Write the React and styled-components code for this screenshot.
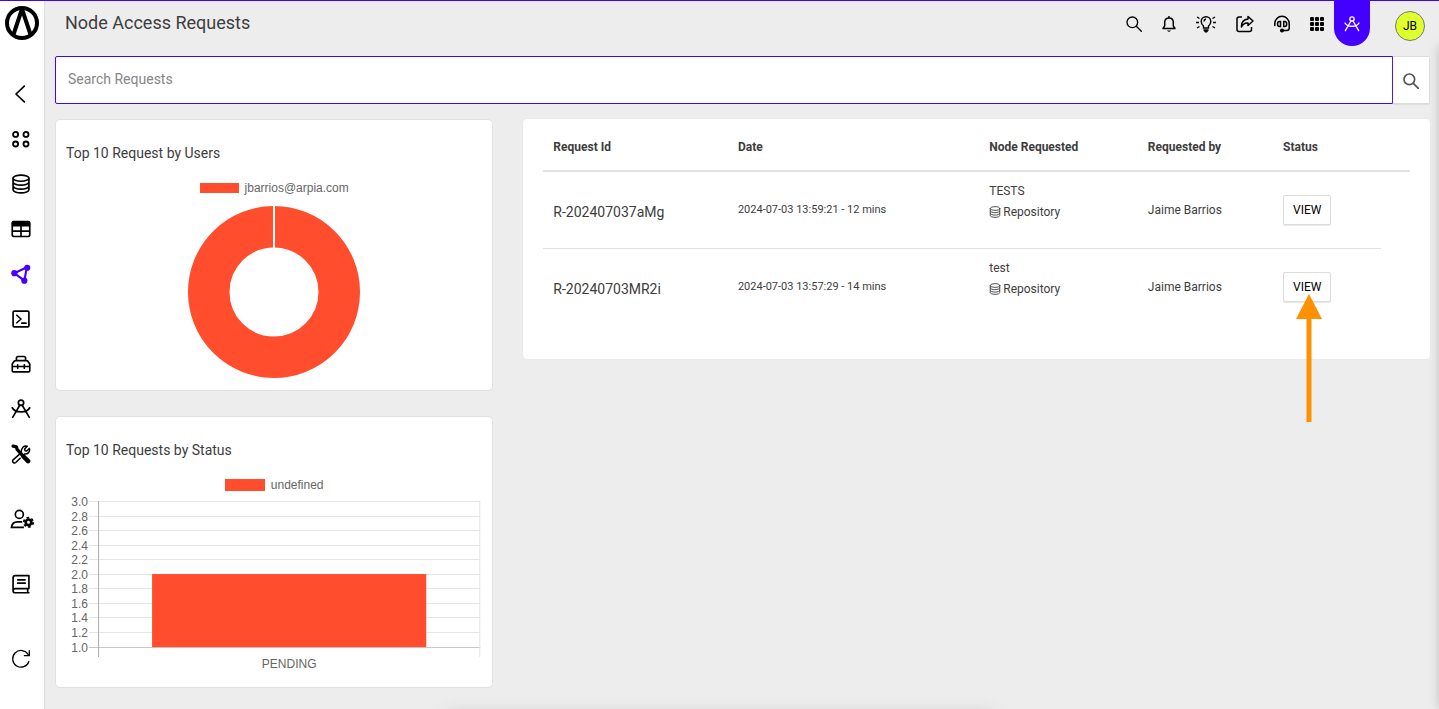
import React from 'react';
import styled, { createGlobalStyle } from 'styled-components';

const purple = '#4400ff';
const orange = '#ff4d2d';

const GlobalStyle = createGlobalStyle`
  *, *::before, *::after {
    box-sizing: border-box;
  }
  html, body {
    margin: 0;
    background: #ededed;
    color: #3d3d3d;
    font-family: Roboto, "Liberation Sans", sans-serif;
    font-size: 12px;
    line-height: 18px;
  }
  body {
    overflow: hidden;
  }
  svg {
    display: block;
  }
  button, input {
    font: inherit;
  }
`;

const Page = styled.div`
  display: flex;
  min-height: 100vh;
  border-top: 1px solid ${purple};
`;

const Sidebar = styled.aside`
  flex: none;
  display: flex;
  flex-direction: column;
  width: 45px;
  background: white;
  border-right: 1px solid #dedede;
`;

const LogoLink = styled.a`
  display: flex;
  padding: 5px;
  height: 45px;
  color: black;
`;

const Nav = styled.nav`
  display: flex;
  flex-direction: column;
  margin-top: 25px;
  padding-right: 2px;
`;

const NavButton = styled.button`
  display: flex;
  align-items: center;
  justify-content: center;
  height: 45px;
  margin: ${(props) => props.$space || 0}px 0 0;
  padding: 0;
  border: 0;
  background: none;
  color: ${(props) => (props.$active ? purple : 'black')};
`;

const Content = styled.div`
  flex: 1;
  min-width: 0;
`;

const Header = styled.header`
  display: flex;
  align-items: flex-start;
  justify-content: space-between;
  height: 45px;
  padding: 0 14px 0 20px;
`;

const PageTitle = styled.h1`
  margin: 10px 0 0;
  font-size: 18px;
  font-weight: 400;
  line-height: 24px;
`;

const Tools = styled.div`
  display: flex;
  align-items: flex-start;
`;

const ToolButton = styled.button`
  display: flex;
  align-items: center;
  height: 45px;
  padding: 0 10px;
  border: 0;
  border-radius: 0 0 18px 18px;
  background: ${(props) => (props.$active ? purple : 'none')};
  color: ${(props) => (props.$active ? 'white' : 'black')};
`;

const Avatar = styled.button`
  width: 30px;
  height: 30px;
  margin: 10px 0 0 25px;
  padding: 0;
  border: 1px solid #777;
  border-radius: 50%;
  background: #e0ff2e;
  color: black;
`;

const Main = styled.main`
  padding: 10px 9px 20px 10px;
`;

const SearchForm = styled.form`
  display: flex;
  height: 48px;
`;

const SearchInput = styled.input`
  flex: 1;
  min-width: 0;
  padding: 0 12px 2px;
  border: 1px solid ${purple};
  border-radius: 2px 0 0 2px;
  outline: 0;
  background: white;
  color: #3d3d3d;
  font-size: 14px;
  &::placeholder {
    color: #868686;
  }
`;

const SearchButton = styled.button`
  display: flex;
  align-items: center;
  justify-content: center;
  width: 37px;
  padding: 2px 0 0;
  border: 1px solid #dcdcdc;
  border-left: 0;
  border-radius: 0 2px 2px 0;
  background: white;
  box-shadow: 0 1px 1px #dcdcdc;
  color: #555;
`;

const Columns = styled.div`
  display: grid;
  grid-template-columns: repeat(3, 1fr);
  align-items: start;
  gap: 30px;
  margin-top: 15px;
`;

const Charts = styled.div`
  display: flex;
  flex-direction: column;
  gap: 25px;
`;

const Card = styled.section`
  height: 272px;
  padding: 23px 10px 0;
  border: 1px solid #dfe1e6;
  border-radius: 5px;
  background: white;
`;

const CardTitle = styled.h2`
  margin: 0;
  font-size: 14px;
  font-weight: 400;
  line-height: 20px;
`;

const Legend = styled.div`
  display: flex;
  align-items: center;
  justify-content: center;
  gap: 6px;
  height: 20px;
  margin-top: 15px;
  color: #666;
  font-family: "Liberation Sans", Arial, sans-serif;
`;

const Swatch = styled.span`
  width: ${(props) => props.$width}px;
  height: ${(props) => props.$height}px;
  background: ${orange};
`;

const Donut = styled.svg`
  margin: 8px auto 0;
  width: 172px;
  height: 172px;
`;

const BarChart = styled.svg`
  width: 100%;
  height: auto;
  fill: #666;
  font-family: "Liberation Sans", Arial, sans-serif;
`;

const TableCard = styled.section`
  grid-column: span 2;
  min-height: 240px;
  padding: 5px 20px;
  border-radius: 4px;
  background: white;
  box-shadow: 0 0 1px #d8d8d8;
`;

const Table = styled.table`
  width: 100%;
  border-collapse: collapse;
  table-layout: fixed;
`;

const Th = styled.th`
  width: ${(props) => props.$width};
  height: 47px;
  padding: 0 10px;
  border-bottom: 2px solid #dee2e6;
  text-align: left;
`;

const Td = styled.td`
  height: 77px;
  padding: 0 10px;
  border-top: 1px solid #dee2e6;
  vertical-align: middle;
`;

const NodeTd = styled(Td)`
  padding-top: 10px;
  vertical-align: top;
`;

const RequestId = styled.span`
  display: block;
  padding-top: 4px;
  font-size: 14px;
`;

const DateText = styled.span`
  font-size: 11px;
`;

const NodeType = styled.div`
  display: flex;
  align-items: center;
  gap: 2px;
  margin-top: 3px;
`;

const Action = styled.div`
  position: relative;
  width: fit-content;
`;

const ViewButton = styled.button`
  display: block;
  height: 30px;
  padding: 0 9px;
  border: 1px solid #dcdcdc;
  border-radius: 2px;
  background: white;
  box-shadow: 0 1px 1px #e6e6e6;
  color: black;
`;

const Pointer = styled.svg`
  position: absolute;
  top: 22px;
  left: 13px;
  fill: #ff9100;
  pointer-events: none;
`;

// closed panels wait just outside the window, only their shadow shows
const Drawer = styled.div`
  position: fixed;
  top: 46px;
  bottom: 0;
  left: 100%;
  width: 300px;
  box-shadow: 0 0 10px rgba(0, 0, 0, 0.2);
`;

const Toast = styled.div`
  position: fixed;
  top: 100%;
  left: 31%;
  right: 31%;
  height: 60px;
  box-shadow: 0 3px 18px rgba(0, 0, 0, 0.1);
`;

const Icon = ({ size = 20, width = 2, children }) => (
  <svg
    width={size}
    height={size}
    viewBox="0 0 24 24"
    fill="none"
    stroke="currentColor"
    strokeWidth={width}
    strokeLinecap="round"
    strokeLinejoin="round"
    aria-hidden="true"
  >
    {children}
  </svg>
);

const Logo = () => (
  <svg width="34" height="34" viewBox="0 0 34 34" fill="none" stroke="currentColor" aria-hidden="true">
    <circle cx="17" cy="17" r="15" strokeWidth="4" />
    <path d="M8.5 28.5 17 3l8.500 25.500" strokeWidth="4" strokeLinejoin="bevel" />
  </svg>
);

const BackIcon = () => <Icon><path d="M16 2.500 6 12l10 9.500" /></Icon>;

const AppsIcon = () => (
  <Icon width={2.2}>
    <circle cx="5.500" cy="6.500" r="3" />
    <circle cx="18" cy="6.500" r="3" />
    <circle cx="5.500" cy="18" r="3" />
    <circle cx="18" cy="18" r="3" />
  </Icon>
);

const DatabaseIcon = ({ size, width }) => (
  <Icon size={size} width={width}>
    <ellipse cx="12" cy="5" rx="9.500" ry="3.700" />
    <path d="M2.500 5v14c0 2 4.200 3.700 9.500 3.700s9.500-1.700 9.500-3.700V5M2.500 9.700c0 2 4.200 3.700 9.500 3.700s9.500-1.700 9.500-3.700M2.500 14.500c0 2 4.200 3.700 9.500 3.700s9.500-1.700 9.500-3.700" />
  </Icon>
);

const TableIcon = () => (
  <Icon>
    <rect x="1.500" y="3" width="21" height="18" rx="2" />
    <path d="M2 4h20v4H2z" fill="currentColor" />
    <path d="M2 14.500h20M12 8v13" />
  </Icon>
);

const NodesIcon = () => (
  <Icon width={2.6}>
    <path d="M4 11 19 4l-3 16z" />
    <g fill="currentColor" stroke="none">
      <circle cx="4" cy="11" r="3.700" />
      <circle cx="19.500" cy="4.500" r="3.700" />
      <circle cx="16" cy="20" r="3.700" />
    </g>
  </Icon>
);

const TerminalIcon = () => (
  <Icon>
    <rect x="2.500" y="2.500" width="19" height="19" rx="1.500" />
    <path d="m7 7.500 5 4.500-5 4.500M13 17h5" />
  </Icon>
);

const ToolboxIcon = () => (
  <Icon>
    <path d="M1.500 12 4 8.500Q4.500 8 5.500 8h13q1 0 1.500.500l2.500 3.500v8q0 1.500-1.500 1.500H3Q1.500 21.500 1.500 20zM6.500 7.500V5q0-2 2-2h7q2 0 2 2v2.500M1.500 15h21M8 13v4M16 13v4" />
  </Icon>
);

const CompassIcon = ({ size }) => (
  <Icon size={size}>
    <circle cx="12" cy="4.500" r="3.200" />
    <path d="M10.500 7.500 2 22M13.500 7.500 22 22M1.500 10.500c3.500 6.500 17.500 6.500 21 0" />
  </Icon>
);

const WrenchIcon = () => (
  <Icon>
    <path d="m2.500 2.500 4 1 .8 3L14 14" strokeWidth="4" />
    <path d="m15 15 5.500 5.500" strokeWidth="5.500" />
    <path d="M12.500 9.500c-.5-4.500 3-8 7-6.700l-3.200 3.200.5 2 2 .5 3.200-3.200c1.500 4-2 7.200-6 6.700M10 12.500l-7.500 6.500c-2 2 1.200 5 3.200 3.200L11 17" strokeWidth="1.800" />
  </Icon>
);

const UserCogIcon = () => (
  <svg width="28" height="20" viewBox="-4 0 33 24" fill="none" stroke="currentColor" strokeWidth="2" aria-hidden="true">
    <circle cx="10.500" cy="6.500" r="4.800" />
    <path d="M14 15.500H8q-6 0-7 6.500h15" />
    <circle cx="21.500" cy="16" r="3.400" strokeWidth="3.200" />
    <circle cx="21.500" cy="16" r="5.600" strokeWidth="2.200" strokeDasharray="3 2.860" />
  </svg>
);

const BookIcon = () => (
  <Icon>
    <path d="M21.500 17.500V2H5Q2.500 2 2.500 4.500V20q0 2.500 2.500 2.500h16.500M21 17.500H5Q2.500 17.500 2.500 20M20 17.500v5M8 7h9M8 11h9" />
  </Icon>
);

const RefreshIcon = () => (
  <Icon width={1.500}>
    <path d="M21.500 15a10 10 0 1 1-1-8.500M22 2v6h-6" />
  </Icon>
);

const SearchIcon = ({ size, width }) => (
  <Icon size={size} width={width}>
    <circle cx="9.500" cy="9.500" r="8" />
    <path d="m15.500 15.500 7.500 7.500" />
  </Icon>
);

const BellIcon = () => (
  <svg width="14" height="18" viewBox="0 0 14 18" fill="none" stroke="currentColor" strokeWidth="1.500" strokeLinejoin="round" aria-hidden="true">
    <path d="M1 13.500h12l-1.700-2.700V7.500C11.300 4.500 9.500 3 7 3S2.700 4.500 2.700 7.500v3.300zM7 1v2" />
    <path d="M5 15.500h4q-2 2.500-4 0" fill="currentColor" stroke="none" />
  </svg>
);

const BulbIcon = () => (
  <svg width="20" height="18" viewBox="0 0 20 18" fill="none" stroke="currentColor" strokeWidth="1.400" aria-hidden="true">
    <path d="M7.500 13v-2Q5.200 9 5.200 6.500a4.800 4.800 0 0 1 9.600 0Q14.800 9 12.500 11v2zM8 6.500q0-2 2-2.500M0 7.500h3M17 7.500h3M1 2l2.500 1.500M19 2l-2.500 1.500M1 13l2.500-1.500M19 13l-2.500-1.500" />
    <path d="M7.500 14.200h5v1.300L11 17.500H9l-1.500-2z" fill="currentColor" stroke="none" />
  </svg>
);

const ShareIcon = () => (
  <svg width="18" height="18" viewBox="0 0 18 18" fill="none" stroke="currentColor" strokeWidth="1.500" strokeLinejoin="round" aria-hidden="true">
    <path d="M6 2H3Q1 2 1 4v10.500Q1 16.500 3 16.500h10.500q2 0 2-2V12" />
    <path d="m12 1.500 5 4.500-5 4.500V8Q7.500 7.500 5.500 12 5 5 12 4z" />
  </svg>
);

const HeadsetIcon = () => (
  <svg width="16" height="18" viewBox="1 0 16 18" fill="none" stroke="currentColor" strokeWidth="1.500" strokeLinecap="round" aria-hidden="true">
    <path d="M1.800 10.500V8.500a7.200 7.200 0 0 1 14.400 0v4.500q0 2.500-2.500 2.500H9M7.500 6.500h-1Q4.500 6.500 4.500 9t2 2.500h1zM10.700 6.500h1q2 0 2 2.500t-2 2.500h-1z" />
    <circle cx="9" cy="15.500" r="1.300" fill="currentColor" />
  </svg>
);

const GridIcon = () => (
  <svg width="14" height="14" viewBox="0 0 14 14" fill="currentColor" aria-hidden="true">
    {[0, 5, 10].map((y) => [0, 5, 10].map((x) => (
      <rect key={`${x}-${y}`} x={x} y={y} width="4" height="4" rx="1" />
    )))}
  </svg>
);

const navItems = [
  { label: 'Back', icon: <BackIcon /> },
  { label: 'Apps', icon: <AppsIcon /> },
  { label: 'Repositories', icon: <DatabaseIcon /> },
  { label: 'Tables', icon: <TableIcon /> },
  { label: 'Nodes', icon: <NodesIcon />, active: true },
  { label: 'Console', icon: <TerminalIcon /> },
  { label: 'Toolbox', icon: <ToolboxIcon /> },
  { label: 'Design', icon: <CompassIcon /> },
  { label: 'Settings', icon: <WrenchIcon /> },
  { label: 'Users', icon: <UserCogIcon />, space: 20 },
  { label: 'Documentation', icon: <BookIcon />, space: 20 },
  { label: 'Refresh', icon: <RefreshIcon />, space: 30 },
];

const tools = [
  { label: 'Search', icon: <SearchIcon size={16} width={2} /> },
  { label: 'Notifications', icon: <BellIcon /> },
  { label: 'Tips', icon: <BulbIcon /> },
  { label: 'Share', icon: <ShareIcon /> },
  { label: 'Support', icon: <HeadsetIcon /> },
  { label: 'Menu', icon: <GridIcon /> },
  { label: 'Workshop', icon: <CompassIcon size={16} />, active: true },
];

const columns = [
  { label: 'Request Id', width: '21.3%' },
  { label: 'Date', width: '29%' },
  { label: 'Node Requested', width: '18.3%' },
  { label: 'Requested by', width: '15.6%' },
  { label: 'Status', width: '12.5%' },
  { label: '', width: 'auto' },
];

const requests = [
  { id: 'R-202407037aMg', date: '2024-07-03 13:59:21 - 12 mins', node: 'TESTS', user: 'Jaime Barrios' },
  { id: 'R-20240703MR2i', date: '2024-07-03 13:57:29 - 14 mins', node: 'test', user: 'Jaime Barrios', marked: true },
];

const ticks = ['3.0', '2.8', '2.6', '2.4', '2.2', '2.0', '1.8', '1.6', '1.4', '1.2', '1.0'];
const tickY = (i) => Math.round(6 + i * 14.55) + 0.5;

function StatusChart() {
  return (
    <BarChart viewBox="0 0 416 176" role="img" aria-label="Requests by status">
      {ticks.map((tick, i) => (
        <g key={tick}>
          <line x1="23" x2="414" y1={tickY(i)} y2={tickY(i)} stroke={tick === '1.0' ? '#c8c8c8' : '#e5e5e5'} />
          <text x="22" y={tickY(i) + 4} fontSize="12" textAnchor="end">{tick}</text>
        </g>
      ))}
      <line x1="32.500" x2="32.500" y1="6" y2="162" stroke="#adadad" />
      <line x1="413.500" x2="413.500" y1="6" y2="162" stroke="#e5e5e5" />
      <rect x="86" y="79" width="274" height="73" fill={orange} />
      <text x="223" y="173" fontSize="12" textAnchor="middle">PENDING</text>
    </BarChart>
  );
}

export default function App() {
  return (
    <Page>
      <GlobalStyle />
      <Sidebar>
        <LogoLink href="#" aria-label="Home"><Logo /></LogoLink>
        <Nav>
          {navItems.map((item) => (
            <NavButton key={item.label} aria-label={item.label} $active={item.active} $space={item.space}>
              {item.icon}
            </NavButton>
          ))}
        </Nav>
      </Sidebar>
      <Content>
        <Header>
          <PageTitle>Node Access Requests</PageTitle>
          <Tools>
            {tools.map((tool) => (
              <ToolButton key={tool.label} aria-label={tool.label} $active={tool.active}>
                {tool.icon}
              </ToolButton>
            ))}
            <Avatar>JB</Avatar>
          </Tools>
        </Header>
        <Main>
          <SearchForm role="search" onSubmit={(e) => e.preventDefault()}>
            <SearchInput type="text" placeholder="Search Requests" aria-label="Search Requests" />
            <SearchButton type="submit" aria-label="Search">
              <SearchIcon size={16} width={2.5} />
            </SearchButton>
          </SearchForm>
          <Columns>
            <Charts>
              <Card>
                <CardTitle>Top 10 Request by Users</CardTitle>
                <Legend><Swatch $width={39} $height={10} />jbarrios@arpia.com</Legend>
                <Donut viewBox="0 0 172 172" role="img" aria-label="Requests by user">
                  <circle cx="86" cy="86" r="65.250" fill="none" stroke={orange} strokeWidth="41.500" />
                  <line x1="86" x2="86" y1="0" y2="43" stroke="white" strokeWidth="2" />
                </Donut>
              </Card>
              <Card>
                <CardTitle>Top 10 Requests by Status</CardTitle>
                <Legend><Swatch $width={40} $height={12} />undefined</Legend>
                <StatusChart />
              </Card>
            </Charts>
            <TableCard>
              <Table>
                <thead>
                  <tr>
                    {columns.map((column) => (
                      <Th key={column.label} $width={column.width}>{column.label}</Th>
                    ))}
                  </tr>
                </thead>
                <tbody>
                  {requests.map((request) => (
                    <tr key={request.id}>
                      <Td><RequestId>{request.id}</RequestId></Td>
                      <Td><DateText>{request.date}</DateText></Td>
                      <NodeTd>
                        <div>{request.node}</div>
                        <NodeType><DatabaseIcon size={12} width={1.8} />Repository</NodeType>
                      </NodeTd>
                      <Td>{request.user}</Td>
                      <Td>
                        <Action>
                          <ViewButton>VIEW</ViewButton>
                          {request.marked && (
                            <Pointer width="26" height="128" viewBox="0 0 26 128" aria-hidden="true">
                              <path d="M13 0 26 25H15.500v103h-5V25H0z" />
                            </Pointer>
                          )}
                        </Action>
                      </Td>
                    </tr>
                  ))}
                </tbody>
              </Table>
            </TableCard>
          </Columns>
        </Main>
      </Content>
      <Drawer />
      <Toast />
    </Page>
  );
}
